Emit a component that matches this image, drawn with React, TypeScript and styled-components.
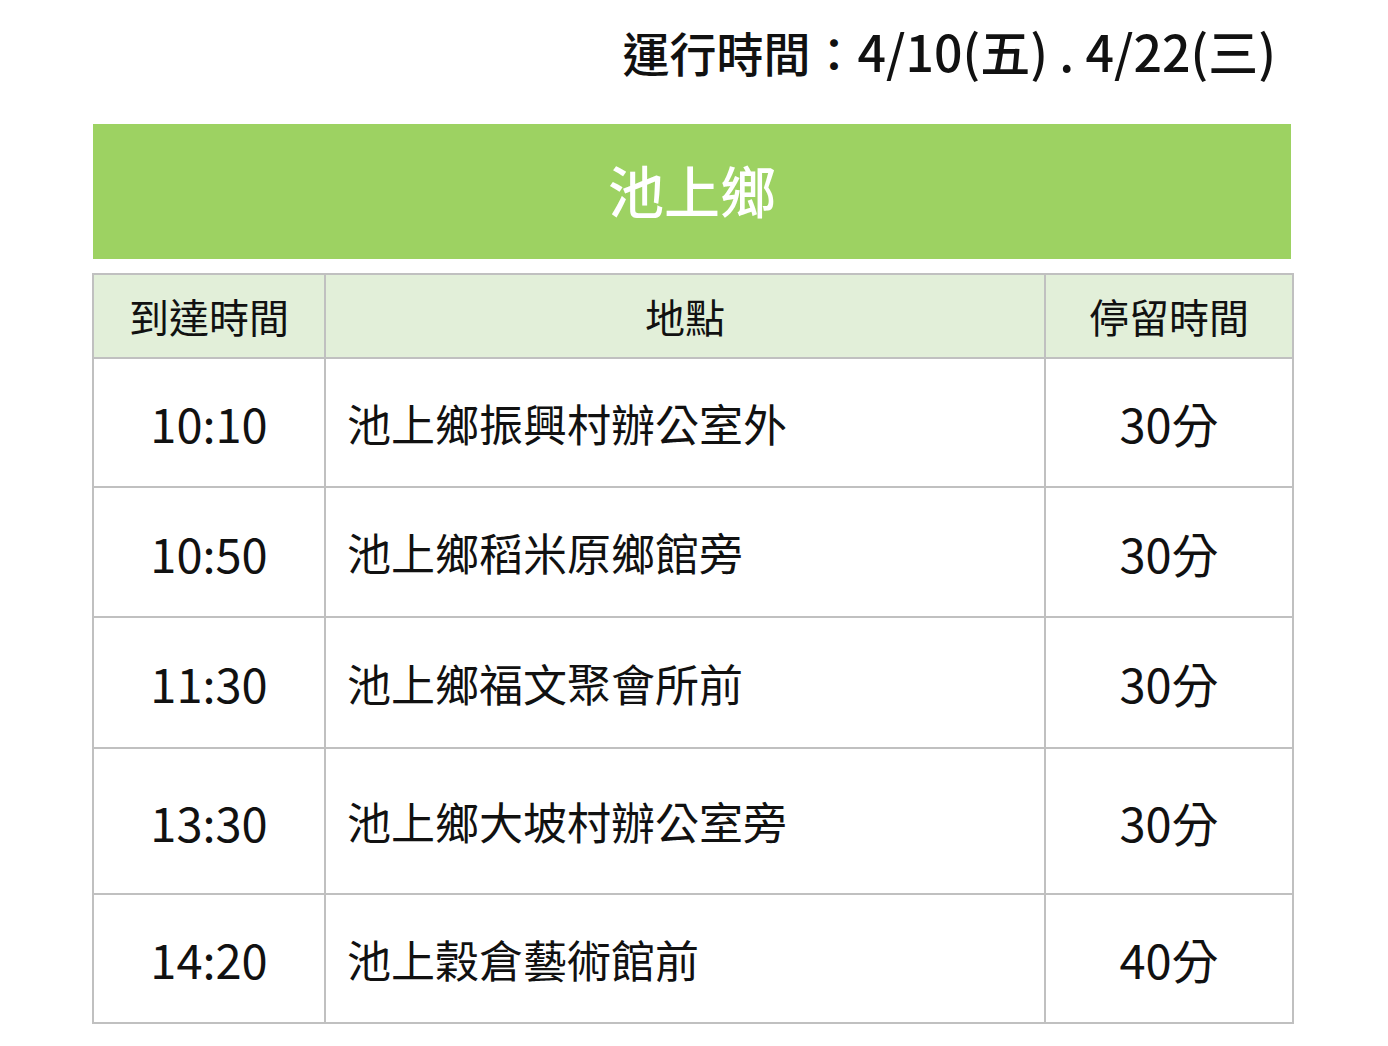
import React from 'react'
import styled, { createGlobalStyle } from 'styled-components'

const GlobalStyle = createGlobalStyle`
  body {
    margin: 0;
    background: #ffffff;
    font-family: "Noto Sans CJK TC", "Noto Sans", sans-serif;
    color: #111111;
  }
`

type Stop = {
  time: string
  place: string
  stay: string
  height: number
}

const stops: Stop[] = [
  { time: '10:10', place: '池上鄉振興村辦公室外', stay: '30分', height: 129 },
  { time: '10:50', place: '池上鄉稻米原鄉館旁', stay: '30分', height: 130 },
  { time: '11:30', place: '池上鄉福文聚會所前', stay: '30分', height: 131 },
  { time: '13:30', place: '池上鄉大坡村辦公室旁', stay: '30分', height: 146 },
  { time: '14:20', place: '池上穀倉藝術館前', stay: '40分', height: 129 },
]

export default function App() {
  return (
    <Page>
      <GlobalStyle />
      <Schedule>
        <RunTime>
          運行時間：<Dates>4/10(五) . 4/22(三)</Dates>
        </RunTime>
        <Banner>池上鄉</Banner>
        <Table>
          <colgroup>
            <col style={{ width: 232 }} />
            <col style={{ width: 720 }} />
            <col style={{ width: 248 }} />
          </colgroup>
          <thead>
            <HeadRow>
              <HeadCell>到達時間</HeadCell>
              <HeadCell>地點</HeadCell>
              <HeadCell>停留時間</HeadCell>
            </HeadRow>
          </thead>
          <tbody>
            {stops.map(s => (
              <BodyRow key={s.time} $h={s.height}>
                <Cell $align="center">{s.time}</Cell>
                <Cell $align="left">{s.place}</Cell>
                <Cell $align="center">{s.stay}</Cell>
              </BodyRow>
            ))}
          </tbody>
        </Table>
      </Schedule>
    </Page>
  )
}

const Page = styled.div`
  width: 1388px;
  height: 1046px;
  padding: 0 0 0 92px;
  box-sizing: border-box;
`

const Schedule = styled.div`
  width: 1200px;
  display: flex;
  flex-direction: column;
`

const RunTime = styled.div`
  height: 124px;
  box-sizing: border-box;
  padding: 18px 16px 0 0;
  text-align: right;
  font-size: 47px;
  font-weight: 500;
  line-height: 64px;
  color: #111111;
  white-space: nowrap;
`

const Dates = styled.span`
  font-size: 50px;
`

const Banner = styled.div`
  height: 135px;
  box-sizing: border-box;
  padding-bottom: 6px;
  margin-left: 1px;
  width: 1198px;
  background: #9dd262;
  color: #ffffff;
  font-size: 56px;
  font-weight: 500;
  display: flex;
  align-items: center;
  justify-content: center;
`

const Table = styled.table`
  margin-top: 14px;
  width: 1200px;
  border-collapse: collapse;
  table-layout: fixed;
  border: 2px solid #c0c0c0;
`

const HeadRow = styled.tr`
  height: 84px;
  background: #e2efd9;
`

const HeadCell = styled.th`
  border: 2px solid #c0c0c0;
  font-size: 40px;
  font-weight: 400;
  text-align: center;
  padding: 0;
  color: #111111;
`

const BodyRow = styled.tr<{ $h: number }>`
  height: ${p => p.$h}px;
`

const Cell = styled.td<{ $align: 'left' | 'center' }>`
  border: 2px solid #c0c0c0;
  font-size: ${p => (p.$align === 'left' ? 44 : 47)}px;
  font-weight: 400;
  text-align: ${p => p.$align};
  padding: ${p => (p.$align === 'left' ? '0 0 0 21px' : '0')};
  color: #111111;
`
